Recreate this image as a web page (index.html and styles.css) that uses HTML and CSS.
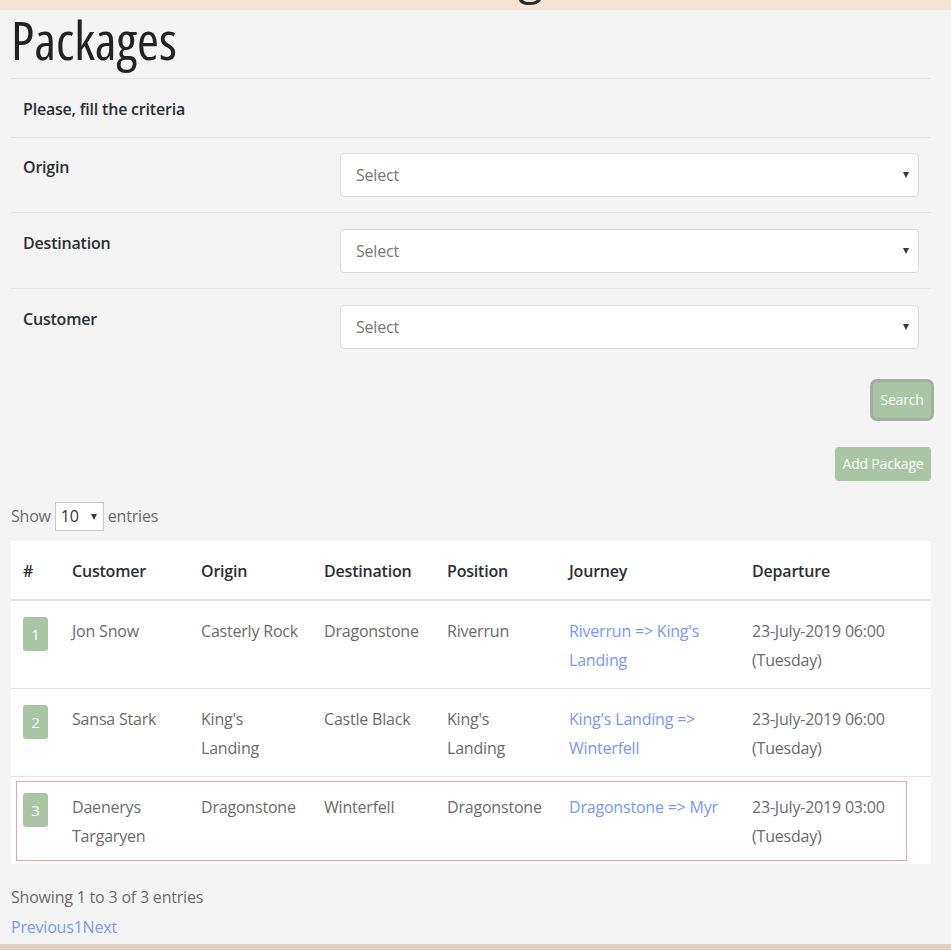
FILE: index.html
```html
<!DOCTYPE html>
<html lang="en">
<head>
<meta charset="utf-8">
<title>Packages</title>
<link rel="stylesheet" href="styles.css">
</head>
<body>
<div class="topbar"><span class="topbar-text">g</span></div>
<main class="page">
  <h1 class="title">Packages</h1>
  <section class="criteria">
    <div class="crit-head">Please, fill the criteria</div>
    <div class="crit-row">
      <div class="crit-label">Origin</div>
      <div class="select"><span>Select</span><span class="caret"></span></div>
    </div>
    <div class="crit-row">
      <div class="crit-label">Destination</div>
      <div class="select"><span>Select</span><span class="caret"></span></div>
    </div>
    <div class="crit-row crit-last">
      <div class="crit-label">Customer</div>
      <div class="select"><span>Select</span><span class="caret"></span></div>
    </div>
  </section>
  <div class="actions actions-search"><button class="btn btn-focus">Search</button></div>
  <div class="actions actions-add"><button class="btn btn-add">Add Package</button></div>
  <div class="length">Show <span class="len-select"><span>10</span><span class="caret"></span></span> entries</div>
  <div class="table-wrap">
    <table class="grid">
      <colgroup>
        <col class="c-num"><col class="c-cust"><col class="c-orig"><col class="c-dest"><col class="c-pos"><col class="c-jour"><col class="c-dep">
      </colgroup>
      <thead>
        <tr><th>#</th><th>Customer</th><th>Origin</th><th>Destination</th><th>Position</th><th>Journey</th><th>Departure</th></tr>
      </thead>
      <tbody>
        <tr>
          <td><span class="badge">1</span></td>
          <td>Jon Snow</td>
          <td>Casterly Rock</td>
          <td>Dragonstone</td>
          <td>Riverrun</td>
          <td><a class="link" href="#">Riverrun =&gt; King's Landing</a></td>
          <td>23-July-2019 06:00 (Tuesday)</td>
        </tr>
        <tr>
          <td><span class="badge">2</span></td>
          <td>Sansa Stark</td>
          <td>King's Landing</td>
          <td>Castle Black</td>
          <td>King's Landing</td>
          <td><a class="link" href="#">King's Landing =&gt; Winterfell</a></td>
          <td>23-July-2019 06:00 (Tuesday)</td>
        </tr>
        <tr>
          <td><span class="badge">3</span></td>
          <td>Daenerys Targaryen</td>
          <td>Dragonstone</td>
          <td>Winterfell</td>
          <td>Dragonstone</td>
          <td><a class="link" href="#">Dragonstone =&gt; Myr</a></td>
          <td>23-July-2019 03:00 (Tuesday)</td>
        </tr>
      </tbody>
    </table>
    <div class="highlight"></div>
  </div>
  <div class="info">Showing 1 to 3 of 3 entries</div>
  <div class="paging"><a class="link" href="#">Previous</a><a class="link" href="#">1</a><a class="link" href="#">Next</a></div>
</main>
<div class="bottombar"></div>
</body>
</html>
```
FILE: styles.css
```css
* { box-sizing: border-box; }
html, body { margin: 0; padding: 0; }
body {
  background: #f4f4f4;
  font-family: "Open Sans", "Noto Sans", sans-serif;
  font-size: 16px;
  letter-spacing: -0.2px;
  color: #6b6b6b;
}
.topbar {
  height: 10px;
  background: #f7e5d3;
  overflow: hidden;
  display: flex;
  padding-left: 518px;
}
.topbar-text {
  display: block;
  font-size: 46px;
  line-height: 48px;
  margin-top: -48px;
  color: #2a2a2a;
}
.page {
  padding: 0 20px 0 11px;
}
.title {
  margin: 0;
  font-size: 53px;
  font-stretch: 80%;
  font-weight: 400;
  letter-spacing: 0;
  line-height: 60px;
  padding-bottom: 8px;
  color: #222;
}
.criteria { border-top: 1px solid #e1e4e8; }
.crit-head {
  padding: 18px 12px 16px;
  line-height: 24px;
  font-weight: 600;
  color: #2b2f33;
}
.crit-row {
  display: flex;
  align-items: flex-start;
  border-top: 1px solid #e1e4e8;
  padding: 15px 12px;
}
.crit-row + .crit-row { padding-top: 16px; }
.crit-label {
  width: 317px;
  flex: none;
  line-height: 24px;
  padding-top: 2px;
  font-weight: 600;
  color: #2b2f33;
}
.select {
  flex: 1;
  height: 44px;
  background: #fff;
  border: 1px solid #d6dbe0;
  border-radius: 4px;
  display: flex;
  align-items: center;
  justify-content: space-between;
  padding: 0 9px 0 15px;
  color: #777;
}
.caret {
  width: 0;
  height: 0;
  border-left: 3px solid transparent;
  border-right: 3px solid transparent;
  border-top: 6px solid #3a3a3a;
}
.actions { display: flex; justify-content: flex-end; }
.actions-search { margin-top: 18px; }
.actions-add { margin-top: 29px; }
.btn {
  border: 0;
  background: #a9c5a5;
  color: #fbfdfb;
  font-family: inherit;
  font-size: 14px;
  letter-spacing: -0.2px;
  border-radius: 4px;
  padding: 0;
  line-height: 34px;
  height: 34px;
}
.btn-focus {
  height: 36px;
  width: 58px;
  box-shadow: 0 0 0 3px #a5aba5;
}
.btn-add { width: 96px; }
.length {
  margin-top: 21px;
  display: flex;
  align-items: center;
  gap: 4px;
  line-height: 29px;
  color: #6b6b6b;
}
.len-select {
  width: 49px;
  height: 29px;
  background: #fff;
  border: 1px solid #c9c9c9;
  display: flex;
  align-items: center;
  justify-content: space-between;
  padding: 0 6px 0 5px;
  color: #333;
}
.table-wrap {
  position: relative;
  margin-top: 10px;
  background: #fff;
}
.grid {
  width: 100%;
  border-collapse: collapse;
  table-layout: fixed;
}
.c-num { width: 49px; }
.c-cust { width: 129px; }
.c-orig { width: 123px; }
.c-dest { width: 123px; }
.c-pos { width: 122px; }
.c-jour { width: 183px; }
.c-dep { width: 191px; }
.grid th {
  text-align: left;
  font-weight: 600;
  color: #2b2f33;
  padding: 16px 12px 13px;
  line-height: 29px;
  border-bottom: 2px solid #e1e4e8;
}
.grid td {
  vertical-align: top;
  padding: 16px 12px 13px;
  line-height: 29px;
  color: #6b6b6b;
  border-top: 1px solid #e1e4e8;
}
.grid tbody tr:first-child td { border-top: 0; }
.badge {
  display: inline-block;
  vertical-align: top;
  width: 25px;
  height: 34px;
  line-height: 34px;
  text-align: center;
  background: #a9c5a5;
  color: #fbfdfb;
  border-radius: 3px;
  font-size: 15px;
}
.link { color: #7b98f7; text-decoration: none; }
.highlight {
  position: absolute;
  left: 5px;
  top: 240px;
  width: 891px;
  height: 80px;
  border: 1px solid #f2a2a2;
  pointer-events: none;
}
.info {
  margin-top: 19px;
  line-height: 29px;
  color: #6b6b6b;
}
.paging { line-height: 29px; margin-top: 1px; }
.bottombar {
  margin-top: 2px;
  height: 6px;
  background: #ddd2c3;
}
```
